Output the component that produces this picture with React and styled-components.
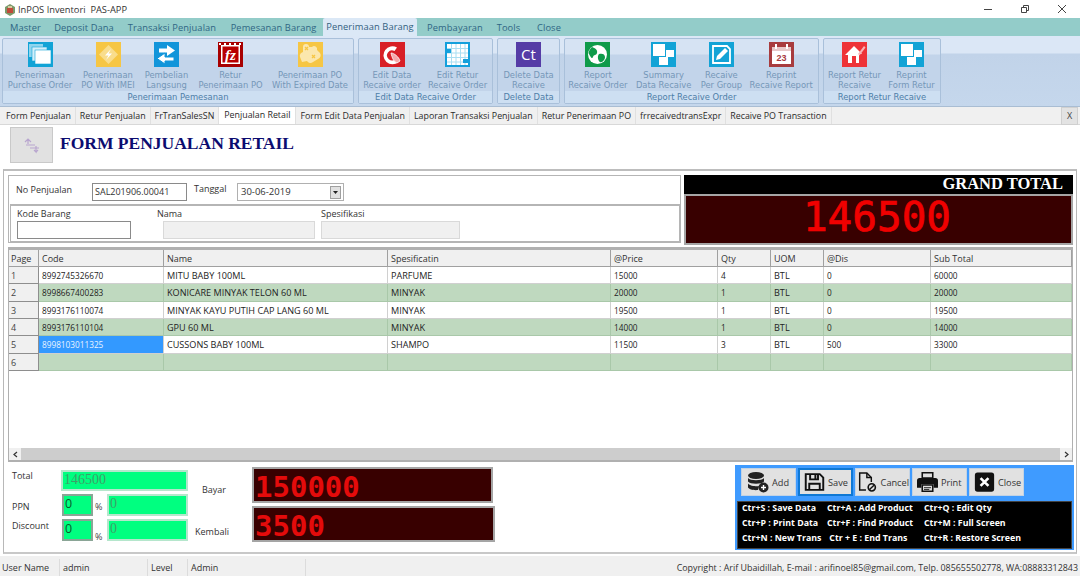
import React from "react";
import styled, { createGlobalStyle } from "styled-components";

const GlobalStyle = createGlobalStyle`
    html, body {
        margin: 0;
        padding: 0;
        background: #f0f0f0;
        font-family: "Open Sans", "Noto Sans", sans-serif;
    }
`;

const Page = styled.div`
    display: flex;
    flex-direction: column;
    width: 1080px;
    height: 576px;
    overflow: hidden;
    background: #fff;
    color: #222;
    font-size: 9px;
`;

const TitleBar = styled.div`
    display: flex;
    align-items: center;
    height: 18px;
    flex: none;
    padding-left: 4px;
    background: #fff;
`;

const TitleText = styled.span`
    margin-left: 2px;
    font-size: 9.3px;
    color: #333;
    white-space: pre;
`;

const WindowButtons = styled.div`
    display: flex;
    margin-left: auto;
`;

const WindowButton = styled.div`
    display: flex;
    align-items: center;
    justify-content: center;
    width: 37px;
    height: 16px;
`;

const MenuBar = styled.div`
    display: flex;
    align-items: flex-end;
    height: 18px;
    flex: none;
    padding-left: 3px;
    background: #93ccc9;
`;

const MenuItem = styled.div`
    width: ${(props) => props.$w}px;
    height: ${(props) => (props.$active ? "18px" : "17px")};
    line-height: 17px;
    text-align: center;
    font-size: 9.3px;
    letter-spacing: 0.1px;
    color: ${(props) => (props.$active ? "#33607f" : "#2f6684")};
    background: ${(props) => (props.$active ? "#dbe8f6" : "transparent")};
    border-radius: 2px 2px 0 0;
`;

const Ribbon = styled.div`
    display: flex;
    gap: 4px;
    height: 71px;
    flex: none;
    padding: 2px 0 2px 2px;
    box-sizing: border-box;
    background: linear-gradient(#dbe7f6 0, #dbe7f6 17px, #c1d3e9 18px, #c5d7ec 100%);
    border-bottom: 1px solid #a9bdd3;
`;

const RibbonGroup = styled.div`
    display: flex;
    flex-direction: column;
    width: ${(props) => props.$w}px;
    box-sizing: border-box;
    border: 1px solid #a9c0da;
    border-radius: 2px;
    background: linear-gradient(#d6e3f3 0, #d6e3f3 15px, #c2d4ea 16px);
`;

const GroupButtons = styled.div`
    display: flex;
    flex: 1;
    padding: 0 1px;
`;

const GroupTitle = styled.div`
    height: 12px;
    padding-top: 1px;
    box-sizing: border-box;
    line-height: 11px;
    text-align: center;
    font-family: "DejaVu Sans", sans-serif;
    font-size: 8.4px;
    color: #4d7ea8;
    background: #cddff2;
`;

const RibbonButton = styled.div`
    display: flex;
    flex-direction: column;
    align-items: center;
    width: ${(props) => props.$w}px;
    padding-top: 3px;
    box-sizing: border-box;
`;

const RibbonLabel = styled.div`
    margin-top: 3px;
    text-align: center;
    white-space: pre;
    font-family: "DejaVu Sans", sans-serif;
    font-size: 8.4px;
    line-height: 10.3px;
    color: #7597b8;
`;

const DocTabs = styled.div`
    display: flex;
    align-items: stretch;
    height: 18px;
    flex: none;
    padding-left: 2px;
    background: #f0f0f0;
    border-bottom: 1px solid #d8d8d8;
    box-sizing: border-box;
`;

const DocTab = styled.div`
    padding: ${(props) => (props.$active ? "0 5px 1px" : "1px 4px 0")};
    line-height: 16px;
    font-size: 8.85px;
    white-space: nowrap;
    color: #2a2a2a;
    background: ${(props) => (props.$active ? "#fff" : "#f0f0f0")};
    border-right: 1px solid #e0e0e0;
`;

const DocClose = styled.div`
    margin-left: auto;
    margin-right: 2px;
    width: 15px;
    height: 16px;
    line-height: 16px;
    text-align: center;
    font-size: 9px;
    color: #444;
    background: #e3e3e3;
    border: 1px solid #d0d0d0;
`;

const FormArea = styled.div`
    display: flex;
    flex-direction: column;
    flex: 1;
    min-height: 0;
    background: #fff;
`;

const FormHeader = styled.div`
    display: flex;
    align-items: center;
    gap: 7px;
    height: 44px;
    flex: none;
    padding: 2px 0 6px 10px;
    box-sizing: border-box;
`;

const HeaderIcon = styled.div`
    display: flex;
    align-items: center;
    justify-content: center;
    width: 43px;
    height: 36px;
    background: #e1e1e1;
    border: 1px solid #c9c9c9;
    box-sizing: border-box;
`;

const FormTitle = styled.h1`
    margin: 0 0 3px;
    font-family: "Liberation Serif", serif;
    font-size: 17.5px;
    font-weight: bold;
    color: #0c0c70;
`;

const Frame = styled.div`
    display: flex;
    flex-direction: column;
    height: 385px;
    flex: none;
    margin: 0 3px;
    padding: 4px 3px 0 4px;
    box-sizing: border-box;
    border: 1px solid #b8b8b8;
    border-top: 2px solid #bdbdbd;
    border-bottom: 2px solid #c8c8c8;
`;

const TopRow = styled.div`
    display: flex;
    gap: 3px;
    height: 70px;
    flex: none;
`;

const EntryPanel = styled.div`
    display: flex;
    flex-direction: column;
    width: 673px;
    height: 68px;
    flex: none;
    box-sizing: border-box;
    border: 1px solid #b5b5b5;
`;

const InvoiceRow = styled.div`
    display: flex;
    align-items: flex-start;
    height: 28px;
    flex: none;
    padding: 7px 0 0 7px;
    box-sizing: border-box;
`;

const Label = styled.span`
    width: ${(props) => props.$w || 0}px;
    flex: none;
    padding-left: ${(props) => props.$left || 0}px;
    margin-top: ${(props) => props.$top || 0}px;
    font-size: 9px;
    line-height: 12px;
    color: #333;
    white-space: nowrap;
`;

const TextInput = styled.div`
    width: ${(props) => props.$w}px;
    height: 18px;
    flex: none;
    padding-left: 2px;
    line-height: 16px;
    font-size: 9px;
    box-sizing: border-box;
    color: #333;
    background: ${(props) => (props.$disabled ? "#f0f0f0" : "#fff")};
    border: 1px solid ${(props) => (props.$disabled ? "#d9d9d9" : "#8a8a8a")};
`;

const DateSelect = styled(TextInput)`
    display: flex;
    justify-content: space-between;
    align-items: center;
    padding: 0 2px 0 3px;
    font-size: 9.5px;
    border-color: #b0b0b0;
`;

const DropButton = styled.div`
    display: flex;
    align-items: center;
    justify-content: center;
    width: 11px;
    height: 13px;
    background: #e1e1e1;
    border: 1px solid #a0a0a0;
    box-sizing: border-box;
`;

const ItemRow = styled.div`
    display: grid;
    grid-template-columns: 146px 158px 140px;
    grid-template-rows: 12px 18px;
    row-gap: 1px;
    flex: 1;
    margin: 0 0 0 1px;
    padding: 2px 0 0 6px;
    box-sizing: border-box;
    border: 1px solid #b5b5b5;
    border-width: 2px 1px 1px 1px;
`;

const ItemLabel = styled.span`
    font-size: 9px;
    line-height: 12px;
    margin-left: ${(props) => props.$left || 0}px;
    color: #333;
`;

const GrandTotal = styled.div`
    display: flex;
    flex-direction: column;
    flex: 1;
    box-sizing: border-box;
    background: #000;
`;

const GrandLabel = styled.div`
    height: 19px;
    flex: none;
    padding-right: 10px;
    text-align: right;
    font-family: "Liberation Serif", serif;
    font-weight: bold;
    font-size: 16.5px;
    line-height: 18px;
    color: #fff;
`;

const LedPanel = styled.div`
    display: flex;
    align-items: center;
    justify-content: ${(props) => (props.$center ? "center" : "flex-start")};
    width: ${(props) => (props.$w ? props.$w + "px" : "auto")};
    height: ${(props) => props.$h}px;
    flex: ${(props) => (props.$w ? "none" : "1")};
    padding: ${(props) => (props.$center ? "0" : "4px 0 0 1px")};
    box-sizing: border-box;
    font-family: "DejaVu Sans Mono", monospace;
    font-weight: bold;
    color: #e40b0b;
    background: #380000;
    border: 2px solid #a5a5a5;
`;

const BigDigits = styled.span`
    margin: 0 3px 5px 0;
    font-size: 41px;
    font-weight: normal;
    color: #f00000;
    -webkit-text-stroke: 0.7px #f00000;
`;

const SmallDigits = styled.span`
    font-size: 29px;
`;

const DataGrid = styled.div`
    display: flex;
    flex-direction: column;
    height: 215px;
    flex: none;
    margin-top: 2px;
    box-sizing: border-box;
    border: 1px solid #a8a8a8;
    border-top-width: 3px;
    border-bottom-width: 2px;
    border-color: #b0b0b0;
`;

const GridTable = styled.div`
    display: grid;
    grid-template-columns: 30px 125px 224px 223px 107px 53px 53px 107px 1fr;
    grid-template-rows: 17px;
    grid-auto-rows: 17.33px;
    flex: 1;
    align-content: start;
    min-height: 0;
`;

const HeadCell = styled.div`
    padding-left: ${(props) => props.$pad || 3}px;
    line-height: 17px;
    font-size: 9px;
    color: #333;
    background: #f0f0f0;
    border-right: 1px solid #a0a0a0;
    border-bottom: 1px solid #a0a0a0;
    box-sizing: border-box;
`;

const PageCell = styled.div`
    padding-left: 2px;
    line-height: 17px;
    font-size: 9px;
    color: #444;
    background: #f0f0f0;
    border-right: 1px solid #8e8e8e;
    border-bottom: 1px solid #8e8e8e;
    box-sizing: border-box;
`;

const Cell = styled.div`
    padding-left: 3px;
    line-height: 17px;
    font-size: ${(props) => (props.$digits ? "8.25px" : "9.1px")};
    white-space: nowrap;
    overflow: hidden;
    color: ${(props) => (props.$selected ? "#e8f3ff" : "#222")};
    background: ${(props) =>
        props.$selected ? "#3399ff" : props.$alt ? "#bfd9bf" : "#fff"};
    border-right: 1px solid ${(props) => (props.$alt ? "#a9c8a9" : "#d0d0d0")};
    border-bottom: 1px solid ${(props) => (props.$alt ? "#a9c8a9" : "#d0d0d0")};
    box-sizing: border-box;
`;

const ScrollBar = styled.div`
    display: flex;
    align-items: center;
    justify-content: space-between;
    height: 12px;
    flex: none;
    background: #cdcdcd;
`;

const ScrollEnd = styled.div`
    display: flex;
    align-items: center;
    justify-content: center;
    width: 12px;
    height: 12px;
    background: #f0f0f0;
`;

const BottomRow = styled.div`
    display: flex;
    flex: 1;
    min-height: 0;
`;

const Totals = styled.div`
    display: grid;
    grid-template-columns: 49px 32px 14px 81px;
    grid-template-rows: 21px 22px 22px;
    row-gap: 3px;
    width: 180px;
    flex: none;
    padding: 8px 0 0 4px;
    box-sizing: border-box;
`;

const TotalLabel = styled.div`
    margin-top: ${(props) => props.$top || 0}px;
    font-size: 9px;
    color: #333;
`;

const MoneyInput = styled.div`
    grid-column: ${(props) => props.$span || "auto"};
    margin-left: ${(props) => (props.$dark ? 1 : 0)}px;
    padding-left: 1px;
    font-family: ${(props) =>
        props.$dark ? '"Open Sans", sans-serif' : '"Liberation Serif", serif'};
    font-size: ${(props) => (props.$dark ? 12.5 : 14)}px;
    line-height: ${(props) => (props.$span ? 15 : 16)}px;
    color: ${(props) => (props.$dark ? "#0a5a2a" : "#3f9f68")};
    background: #00ff80;
    box-sizing: border-box;
    border: 2px solid ${(props) => (props.$dark ? "#8aa596" : "#b5e6cc")};
`;

const Percent = styled.div`
    padding: ${(props) => props.$top}px 0 0 2px;
    font-size: 9px;
    color: #444;
`;

const PayLabels = styled.div`
    display: flex;
    flex-direction: column;
    width: 64px;
    flex: none;
    padding-left: 7px;
    box-sizing: border-box;
`;

const PayLabel = styled.div`
    margin-top: ${(props) => props.$top}px;
    margin-left: ${(props) => props.$left || 0}px;
    font-size: 9px;
    color: #333;
`;

const PayPanels = styled.div`
    display: flex;
    flex-direction: column;
    gap: 3px;
    width: 243px;
    flex: none;
    padding-top: 5px;
`;

const ActionPanel = styled.div`
    display: flex;
    flex-direction: column;
    margin: 3px -1px 0 auto;
    width: 339px;
    height: 85px;
    box-sizing: border-box;
    background: #3f9bff;
    padding: 3px 2px 1px 2px;
`;

const ActionButtons = styled.div`
    display: flex;
    gap: 2px;
    height: 30px;
    padding-left: 4px;
`;

const ActionButton = styled.div`
    display: flex;
    align-items: center;
    gap: ${(props) => props.$gap || 3}px;
    width: 55px;
    height: 28px;
    padding-left: ${(props) => props.$pad}px;
    box-sizing: border-box;
    font-size: 9.2px;
    color: #333;
    background: #e1e1e1;
    border: ${(props) =>
        props.$active ? "2px solid #0f78d4" : "1px solid #c3d3e4"};
`;

const Shortcuts = styled.div`
    display: grid;
    grid-template-columns: 85px 97px 1fr;
    grid-auto-rows: 15px;
    margin-top: 3px;
    height: 48px;
    padding: 0 0 0 4px;
    box-sizing: border-box;
    font-size: 8.8px;
    font-weight: bold;
    line-height: 12px;
    white-space: pre;
    color: #fff;
    background: #000;
    border: 1px solid #444;
`;

const StatusBar = styled.div`
    display: flex;
    align-items: center;
    height: 20px;
    flex: none;
    margin-top: 2px;
    padding: 3px 0 0 2px;
    box-sizing: border-box;
    background: #f0f0f0;
    font-size: 9px;
    color: #333;
`;

const StatusCell = styled.div`
    width: ${(props) => props.$w}px;
    flex: none;
    padding-left: ${(props) => props.$pad || 0}px;
    box-sizing: border-box;
    line-height: 17px;
    border-right: 1px solid #dcdcdc;
`;

const StatusRight = styled.div`
    margin-left: auto;
    padding-right: 2px;
    font-size: 8.9px;
    white-space: nowrap;
`;

const Square = ({ bg, children }) => (
    <svg width="25" height="25" viewBox="0 0 25 25">
        <rect width="25" height="25" fill={bg} />
        {children}
    </svg>
);

const PagesIcon = () => (
    <Square bg="#12a3d6">
        <rect x="1" y="2" width="14" height="13" fill="#8fd5ee" />
        <rect x="4" y="5" width="15" height="14" fill="#d4effa" stroke="#12a3d6" strokeWidth=".6" />
        <rect x="7" y="8" width="16" height="14" fill="#fff" stroke="#12a3d6" strokeWidth=".6" />
    </Square>
);

const ImeiIcon = () => (
    <Square bg="#f6c644">
        <path d="M12.5 3 22 12.5 12.5 22 3 12.5Z" fill="#f9dd8c" />
        <path d="M15 7 9 13.5h3.5L10 18l6-6.5h-3.5Z" fill="#fff" />
    </Square>
);

const SwapIcon = () => (
    <Square bg="#1295da">
        <path d="M13 3 21 8.5 13 14v-3.5H5v-4h8Z" fill="#fff" />
        <path d="M11 11 3 16.5 11 22v-3h9v-4h-9Z" fill="#fff" stroke="#1295da" strokeWidth="1" />
    </Square>
);

const FzIcon = () => (
    <Square bg="#a80000">
        <rect x="3" y="3" width="19" height="19" fill="#fff" />
        <path d="M1 1h2v2H1zM6 1h2v2H6zM11 1h2v2h-2zM16 1h2v2h-2zM21 1h2v2h-2z" fill="#fff" />
        <rect x="4.5" y="4.5" width="16" height="16" fill="#b80000" />
        <text x="12.5" y="18" textAnchor="middle" fontFamily="Liberation Serif, serif" fontStyle="italic" fontWeight="bold" fontSize="15" fill="#fff">fz</text>
    </Square>
);

const PuzzleIcon = () => (
    <Square bg="#f6c644">
        <path d="M5 5a3 3 0 0 1 6 0h3a3 3 0 0 1 5 3l3 3a4 4 0 0 1-2 6l-5 3a4 4 0 0 1-6-1l-5 1-2-5a4 4 0 0 1 3-5Z" fill="#fbe7ad" />
        <path d="M7 5l3 3M10 5 7 8M14 13l3 3M17 13l-3 3" stroke="#f6c644" strokeWidth="1.3" />
    </Square>
);

const SwirlIcon = () => (
    <Square bg="#d81f26">
        <path d="M17 5.5a9 9 0 1 0 1.5 14.5l-3-3a5 5 0 1 1-1-8Z" fill="#fff" />
        <path d="M11 11c3 0 8 4 9 8l-3 2c-3-1-5-5-6-10Z" fill="#f4a9ab" stroke="#fff" strokeWidth=".8" />
    </Square>
);

const TableIcon = () => (
    <Square bg="#14a0dc">
        <rect x="2" y="2" width="21" height="21" fill="#fff" />
        <path d="M2 6.5h21M2 11h21M2 15.5h21M2 20h21M6.5 2v21M11 2v21M15.5 2v21M20 2v21" stroke="#a9def2" strokeWidth="1" />
        <rect x="2" y="7" width="4" height="4" fill="#14a0dc" />
        <rect x="18" y="17" width="5" height="4" fill="#14a0dc" />
    </Square>
);

const CtIcon = () => (
    <Square bg="#553ca6">
        <text x="12.5" y="18" textAnchor="middle" fontFamily="Open Sans, sans-serif" fontSize="15" fill="#fff">Ct</text>
    </Square>
);

const GlobeIcon = () => (
    <Square bg="#0f9b4a">
        <circle cx="12.5" cy="12.5" r="9.5" fill="#fff" />
        <path d="M7 5c3 1 6 3 5 6s-3 1-4 4-3-1-4-3 1-5 3-7ZM14 12c3-1 6 0 6 3s-3 6-5 5-3-6-1-8Z" fill="#0f9b4a" />
    </Square>
);

const BlocksIcon = () => (
    <Square bg="#12a3d6">
        <rect x="2" y="2" width="12" height="12" fill="#fff" />
        <rect x="15" y="8" width="8" height="7" fill="#fff" />
        <rect x="8" y="15" width="9" height="8" fill="#fff" />
    </Square>
);

const NoteIcon = () => (
    <Square bg="#12a3d6">
        <path d="M4 4h14l3 3v14H4Z" fill="none" stroke="#fff" strokeWidth="1.8" />
        <path d="M7 18l1-4 8-8 3 3-8 8Z" fill="#fff" />
    </Square>
);

const DateIcon = () => (
    <Square bg="#a83c3e">
        <rect x="3" y="5" width="19" height="17" fill="#fff" />
        <rect x="3" y="5" width="19" height="4" fill="#e8c8c8" />
        <rect x="6" y="2" width="2" height="5" fill="#fff" />
        <rect x="17" y="2" width="2" height="5" fill="#fff" />
        <text x="12.5" y="19" textAnchor="middle" fontFamily="Liberation Sans, sans-serif" fontWeight="bold" fontSize="9" fill="#a83c3e">23</text>
    </Square>
);

const HomeIcon = () => (
    <Square bg="#ee3338">
        <path d="M3 13 12 4l8 8h-3v9H6v-8Z" fill="#fff" />
        <rect x="10" y="14" width="4" height="7" fill="#ee3338" />
        <path d="M16 12 22 4l1.5 1.5-6 8Z" fill="#f9b4b6" />
    </Square>
);

const ribbonGroups = [
    {
        title: "Penerimaan Pemesanan",
        width: 352,
        buttons: [
            { w: 72, icon: <PagesIcon />, label: "Penerimaan\nPurchase Order" },
            { w: 64, icon: <ImeiIcon />, label: "Penerimaan\nPO With IMEI" },
            { w: 53, icon: <SwapIcon />, label: "Pembelian\nLangsung" },
            { w: 75, icon: <FzIcon />, label: "Retur\nPenerimaan PO" },
            { w: 84, icon: <PuzzleIcon />, label: "Penerimaan PO\nWith Expired Date" },
        ],
    },
    {
        title: "Edit Data Recaive Order",
        width: 135,
        buttons: [
            { w: 65, icon: <SwirlIcon />, label: "Edit Data\nRecaive order" },
            { w: 68, icon: <TableIcon />, label: "Edit Retur\nRecaive Order" },
        ],
    },
    {
        title: "Delete Data",
        width: 63,
        buttons: [{ w: 59, icon: <CtIcon />, label: "Delete Data\nRecaive" }],
    },
    {
        title: "Report Recaive Order",
        width: 255,
        buttons: [
            { w: 64, icon: <GlobeIcon />, label: "Report\nRecaive Order" },
            { w: 68, icon: <BlocksIcon />, label: "Summary\nData Recaive" },
            { w: 48, icon: <NoteIcon />, label: "Recaive\nPer Group" },
            { w: 72, icon: <DateIcon />, label: "Reprint\nRecaive Report" },
        ],
    },
    {
        title: "Report Retur Recaive",
        width: 118,
        buttons: [
            { w: 60, icon: <HomeIcon />, label: "Report Retur\nRecaive" },
            { w: 56, icon: <BlocksIcon />, label: "Reprint\nForm Retur" },
        ],
    },
];

const menuItems = [
    ["Master", 45],
    ["Deposit Dana", 72],
    ["Transaksi Penjualan", 104],
    ["Pemesanan Barang", 99],
    ["Penerimaan Barang", 94, true],
    ["Pembayaran", 76],
    ["Tools", 31],
    ["Close", 50],
];

const docTabs = [
    "Form Penjualan",
    "Retur Penjualan",
    "FrTranSalesSN",
    "Penjualan Retail",
    "Form Edit Data Penjualan",
    "Laporan Transaksi Penjualan",
    "Retur Penerimaan PO",
    "frrecaivedtransExpr",
    "Recaive PO Transaction",
];

const gridColumns = ["Page", "Code", "Name", "Spesificatin", "@Price", "Qty", "UOM", "@Dis", "Sub Total"];

// columns holding only digits render narrower in the original font
const digitColumns = [0, 3, 4, 6, 7];

const gridRows = [
    ["8992745326670", "MITU BABY 100ML", "PARFUME", "15000", "4", "BTL", "0", "60000"],
    ["8998667400283", "KONICARE MINYAK TELON 60 ML", "MINYAK", "20000", "1", "BTL", "0", "20000"],
    ["8993176110074", "MINYAK KAYU PUTIH CAP LANG 60 ML", "MINYAK", "19500", "1", "BTL", "0", "19500"],
    ["8993176110104", "GPU 60 ML", "MINYAK", "14000", "1", "BTL", "0", "14000"],
    ["8998103011325", "CUSSONS BABY 100ML", "SHAMPO", "11500", "3", "BTL", "500", "33000"],
    ["", "", "", "", "", "", "", ""],
];

const shortcuts = [
    "Ctr+S : Save Data",
    "Ctr+A : Add Product",
    "Ctr+Q : Edit Qty",
    "Ctr+P : Print Data",
    "Ctr+F : Find Product",
    "Ctr+M : Full Screen",
    "Ctr+N : New Trans",
    " Ctr + E : End Trans",
    "Ctr+R : Restore Screen",
];

const AppLogo = () => (
    <svg width="12" height="13" viewBox="0 0 12 13">
        <path d="M1 4 6 1l5 3v6l-5 3-5-3Z" fill="#7a9a6a" />
        <path d="M3 5h6v5H3Z" fill="#c04a3a" />
        <path d="M4 3h4v2H4Z" fill="#d9c9a0" />
    </svg>
);

const Stroke = ({ children }) => (
    <svg width="10" height="10" viewBox="0 0 10 10" fill="none" stroke="#444">
        {children}
    </svg>
);

const DatabaseIcon = () => (
    <svg width="22" height="22" viewBox="0 0 22 22">
        <ellipse cx="9" cy="4.5" rx="8" ry="3.5" fill="#222" />
        <path d="M1 7c2 3 14 3 16 0v3.5c-2 3-14 3-16 0ZM1 12.5c2 3 10 3 11 2.5l-1 4c-4 .5-9-.5-10-2.5Z" fill="#222" />
        <circle cx="16.5" cy="16.5" r="5" fill="#222" />
        <path d="M16.5 14v5M14 16.5h5" stroke="#fff" strokeWidth="1.4" />
    </svg>
);

const SaveIcon = () => (
    <svg width="21" height="22" viewBox="0 0 24 24" fill="none" stroke="#111" strokeWidth="2.2">
        <path d="M2 3h16l4 4v14H2Z" />
        <path d="M7 3v6h9V3M13 4v4" />
        <path d="M6 21v-7h12v7" />
    </svg>
);

const CancelIcon = () => (
    <svg width="21" height="24" viewBox="0 0 23 24" fill="none" stroke="#111" strokeWidth="1.6">
        <path d="M10 21H3V2h8l5 5v5" />
        <path d="M11 2v5h5" />
        <circle cx="16.5" cy="18" r="4" fill="#e1e1e1" strokeWidth="1.8" />
        <path d="M14 20.5l5-5" />
    </svg>
);

const PrintIcon = () => (
    <svg width="21" height="22" viewBox="0 0 24 23">
        <path d="M6 1h12v6H6Z" fill="none" stroke="#111" strokeWidth="1.8" />
        <path d="M3 7h18a3 3 0 0 1 3 3v8h-5v-4H5v4H0v-8a3 3 0 0 1 3-3Z" fill="#111" />
        <path d="M6 15h12v7H6Z" fill="none" stroke="#111" strokeWidth="1.8" />
        <path d="M8 18h8M8 20h6" stroke="#111" strokeWidth="1" />
    </svg>
);

const CloseIcon = () => (
    <svg width="21" height="22" viewBox="0 0 24 24">
        <rect x="1" y="1" width="22" height="22" rx="3" fill="#111" />
        <path d="M7.5 7.5l9 9M16.5 7.5l-9 9" stroke="#fff" strokeWidth="3" />
    </svg>
);

const App = () => {
    return (
        <Page>
            <GlobalStyle />
            <TitleBar>
                <AppLogo />
                <TitleText>InPOS Inventori  PAS-APP</TitleText>
                <WindowButtons>
                    <WindowButton>
                        <Stroke>
                            <path d="M1 5.5h8" />
                        </Stroke>
                    </WindowButton>
                    <WindowButton>
                        <Stroke>
                            <path d="M1.5 3.5h5v5h-5ZM3.5 3.5v-2h5v5h-2" />
                        </Stroke>
                    </WindowButton>
                    <WindowButton>
                        <Stroke>
                            <path d="M1 1l8 8M9 1l-8 8" />
                        </Stroke>
                    </WindowButton>
                </WindowButtons>
            </TitleBar>

            <MenuBar>
                {menuItems.map(([name, w, active]) => (
                    <MenuItem key={name} $w={w} $active={active}>
                        {name}
                    </MenuItem>
                ))}
            </MenuBar>

            <Ribbon>
                {ribbonGroups.map((group) => (
                    <RibbonGroup key={group.title} $w={group.width}>
                        <GroupButtons>
                            {group.buttons.map((button) => (
                                <RibbonButton key={button.label} $w={button.w}>
                                    {button.icon}
                                    <RibbonLabel>{button.label}</RibbonLabel>
                                </RibbonButton>
                            ))}
                        </GroupButtons>
                        <GroupTitle>{group.title}</GroupTitle>
                    </RibbonGroup>
                ))}
            </Ribbon>

            <DocTabs>
                {docTabs.map((tab) => (
                    <DocTab key={tab} $active={tab === "Penjualan Retail"}>
                        {tab}
                    </DocTab>
                ))}
                <DocClose>X</DocClose>
            </DocTabs>

            <FormArea>
                <FormHeader>
                    <HeaderIcon>
                        <svg width="20" height="20" viewBox="0 0 20 20" fill="none" stroke="#b9a6cf" strokeWidth="1.2">
                            <path d="M3 7l3-3 3 3M6 4v5M4 10h9M8 13h9M14 11v6l-2-2M14 17l2-2" />
                        </svg>
                    </HeaderIcon>
                    <FormTitle>FORM PENJUALAN RETAIL</FormTitle>
                </FormHeader>

                <Frame>
                    <TopRow>
                        <EntryPanel>
                            <InvoiceRow>
                                <Label $w={76} $top={1}>
                                    No Penjualan
                                </Label>
                                <TextInput $w={95}>SAL201906.00041</TextInput>
                                <Label $w={43} $left={7}>
                                    Tanggal
                                </Label>
                                <DateSelect $w={107}>
                                    30-06-2019
                                    <DropButton>
                                        <svg width="5" height="3" viewBox="0 0 5 3">
                                            <path d="M0 0h5L2.5 3Z" fill="#222" />
                                        </svg>
                                    </DropButton>
                                </DateSelect>
                            </InvoiceRow>
                            <ItemRow>
                                <ItemLabel>Kode Barang</ItemLabel>
                                <ItemLabel $left={-6}>Nama</ItemLabel>
                                <ItemLabel>Spesifikasi</ItemLabel>
                                <TextInput $w={114} />
                                <TextInput $w={152} $disabled />
                                <TextInput $w={139} $disabled />
                            </ItemRow>
                        </EntryPanel>
                        <GrandTotal>
                            <GrandLabel>GRAND TOTAL</GrandLabel>
                            <LedPanel $center $h={50}>
                                <BigDigits>146500</BigDigits>
                            </LedPanel>
                        </GrandTotal>
                    </TopRow>

                    <DataGrid>
                        <GridTable>
                            {gridColumns.map((column, index) => (
                                <HeadCell key={column} $pad={index === 0 ? 2 : 3}>
                                    {column}
                                </HeadCell>
                            ))}
                            {gridRows.map((row, rowIndex) => (
                                <React.Fragment key={rowIndex}>
                                    <PageCell>{rowIndex + 1}</PageCell>
                                    {row.map((value, colIndex) => (
                                        <Cell
                                            key={colIndex}
                                            $alt={rowIndex % 2 === 1}
                                            $digits={digitColumns.includes(colIndex)}
                                            $selected={rowIndex === 4 && colIndex === 0}
                                        >
                                            {value}
                                        </Cell>
                                    ))}
                                </React.Fragment>
                            ))}
                        </GridTable>
                        <ScrollBar>
                            <ScrollEnd>
                                <svg width="5" height="7" viewBox="0 0 5 7" fill="none" stroke="#333" strokeWidth="1.2">
                                    <path d="M4 1 1 3.5 4 6" />
                                </svg>
                            </ScrollEnd>
                            <ScrollEnd>
                                <svg width="5" height="7" viewBox="0 0 5 7" fill="none" stroke="#333" strokeWidth="1.2">
                                    <path d="M1 1l3 2.5L1 6" />
                                </svg>
                            </ScrollEnd>
                        </ScrollBar>
                    </DataGrid>

                    <BottomRow>
                        <Totals>
                            <TotalLabel $top={-1}>Total</TotalLabel>
                            <MoneyInput $span="2 / span 3">146500</MoneyInput>
                            <TotalLabel $top={6}>PPN</TotalLabel>
                            <MoneyInput $dark>0</MoneyInput>
                            <Percent $top={6}>%</Percent>
                            <MoneyInput>0</MoneyInput>
                            <TotalLabel>Discount</TotalLabel>
                            <MoneyInput $dark>0</MoneyInput>
                            <Percent $top={11}>%</Percent>
                            <MoneyInput>0</MoneyInput>
                        </Totals>
                        <PayLabels>
                            <PayLabel $top={21} $left={7}>
                                Bayar
                            </PayLabel>
                            <PayLabel $top={29}>Kembali</PayLabel>
                        </PayLabels>
                        <PayPanels>
                            <LedPanel $w={241} $h={36}>
                                <SmallDigits>150000</SmallDigits>
                            </LedPanel>
                            <LedPanel $w={243} $h={36}>
                                <SmallDigits>3500</SmallDigits>
                            </LedPanel>
                        </PayPanels>
                        <ActionPanel>
                            <ActionButtons>
                                <ActionButton $pad={5} $gap={3}>
                                    <DatabaseIcon />
                                    Add
                                </ActionButton>
                                <ActionButton $active $pad={4}>
                                    <SaveIcon />
                                    Save
                                </ActionButton>
                                <ActionButton $pad={1}>
                                    <CancelIcon />
                                    Cancel
                                </ActionButton>
                                <ActionButton $pad={4}>
                                    <PrintIcon />
                                    Print
                                </ActionButton>
                                <ActionButton $pad={4}>
                                    <CloseIcon />
                                    Close
                                </ActionButton>
                            </ActionButtons>
                            <Shortcuts>
                                {shortcuts.map((text) => (
                                    <span key={text}>{text}</span>
                                ))}
                            </Shortcuts>
                        </ActionPanel>
                    </BottomRow>
                </Frame>
            </FormArea>

            <StatusBar>
                <StatusCell $w={58}>User Name</StatusCell>
                <StatusCell $w={88} $pad={3}>
                    admin
                </StatusCell>
                <StatusCell $w={40} $pad={3}>
                    Level
                </StatusCell>
                <StatusCell $w={118} $pad={3}>
                    Admin
                </StatusCell>
                <StatusRight>
                    Copyright : Arif Ubaidillah, E-mail : arifinoel85@gmail.com, Telp. 085655502778, WA:08883312843
                </StatusRight>
            </StatusBar>
        </Page>
    );
};

export default App;
